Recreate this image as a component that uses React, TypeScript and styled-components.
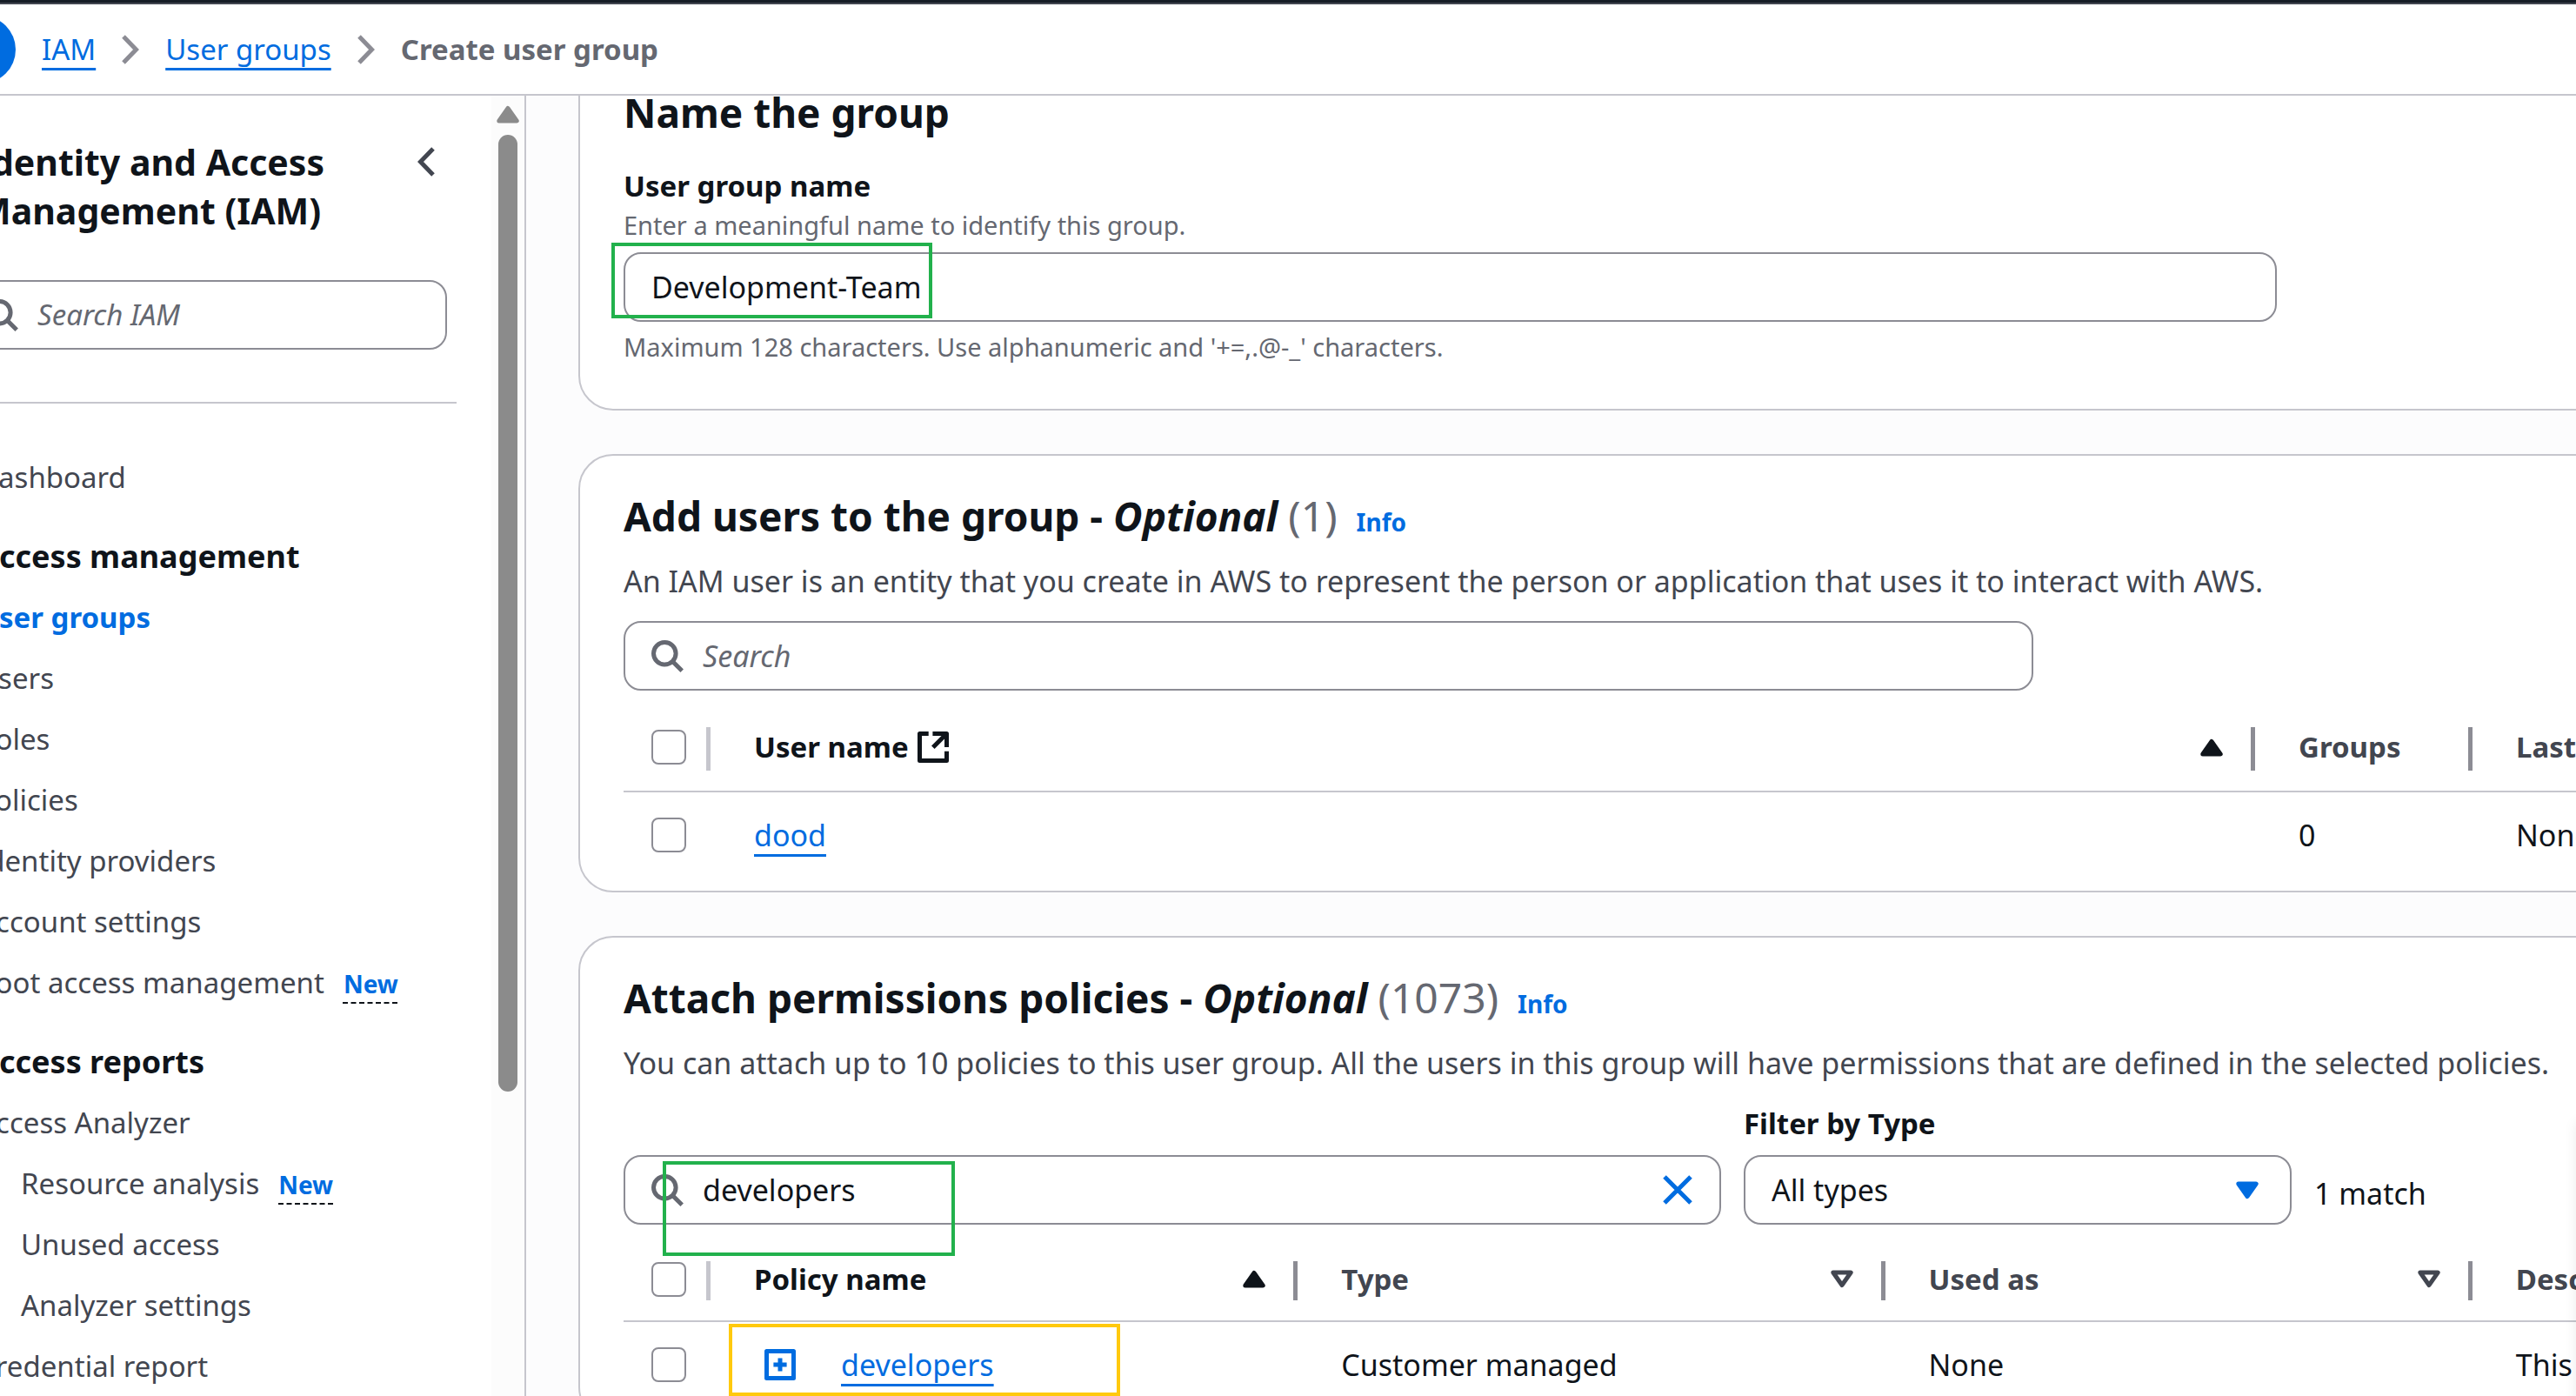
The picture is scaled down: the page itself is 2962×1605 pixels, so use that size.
import React from 'react';
import styled, { createGlobalStyle, css } from 'styled-components';

const color = {
  ink: '#0f141a',
  body: '#424650',
  muted: '#656871',
  control: '#8c8c94',
  line: '#c6c6cd',
  link: '#006ce0',
  green: '#22b14c',
  yellow: '#ffc90e',
};

const GlobalStyle = createGlobalStyle`
  *, *::before, *::after { box-sizing: border-box; }
  body {
    margin: 0;
    overflow: hidden;
    background: #fff;
    color: ${color.ink};
    font-family: "Noto Sans", "Open Sans", sans-serif;
    font-size: 34px;
    line-height: 50px;
  }
  h1, h2, h3, p, ul { margin: 0; padding: 0; }
  input, select, button { font: inherit; color: inherit; margin: 0; }
  button { border: 0; padding: 0; background: none; display: flex; align-items: center; cursor: pointer; }
  svg { display: block; flex: none; }
`;

/* ---------- icons ---------- */

const SearchIcon = () => (
  <svg width="37" height="37" viewBox="0 0 37 37" fill="none" stroke={color.muted} strokeWidth="5">
    <circle cx="15.3" cy="15.3" r="12.8" />
    <path d="M24.4 24.4 35.2 35.2" />
  </svg>
);

const ChevronRight = () => (
  <svg width="20" height="34" viewBox="0 0 20 34" fill="none" stroke={color.control} strokeWidth="5">
    <path d="M2 2 16.5 17 2 32" />
  </svg>
);

const ChevronLeft = () => (
  <svg width="20" height="34" viewBox="0 0 20 34" fill="none" stroke={color.body} strokeWidth="5">
    <path d="M18 2 3.5 17 18 32" />
  </svg>
);

const ExternalIcon = () => (
  <svg width="36" height="36" viewBox="0 0 36 36" fill="none" stroke={color.ink} strokeWidth="5" strokeLinejoin="round">
    <path d="M12.7 2.5H2.5v31h31V22.8" />
    <path d="M17.4 2.5h16.1v15.6" />
    <path d="M33 3 17.8 18.2" />
  </svg>
);

const CloseIcon = () => (
  <svg width="34" height="34" viewBox="0 0 34 34" fill="none" stroke={color.link} strokeWidth="5">
    <path d="M2 2 32 32M32 2 2 32" />
  </svg>
);

const ExpandIcon = () => (
  <svg width="36" height="36" viewBox="0 0 36 36" fill="none" stroke={color.link} strokeWidth="5" strokeLinejoin="round">
    <path d="M2.5 2.5h31v31h-31z" />
    <path d="M10.4 18h15.2M18 10.4v15.2" />
  </svg>
);

const Caret = ({ tint, up, hollow }: { tint: string; up?: boolean; hollow?: boolean }) => (
  <svg width="26" height="21" viewBox="0 0 26 21" stroke={tint} strokeWidth="5" strokeLinejoin="round" fill={hollow ? 'none' : tint}>
    <path d={up ? 'M13 3.5 23.2 18H2.8z' : 'M13 17.5 23.2 3H2.8z'} />
  </svg>
);

/* ---------- shell ---------- */

const Shell = styled.div`
  display: flex;
  flex-direction: column;
  height: 100vh;
  margin-left: -95px;
  overflow: hidden;
`;

const TopStrip = styled.div`
  flex: none;
  height: 5px;
  background: #161d26;
  border-bottom: 2px solid ${color.body};
`;

const Header = styled.header`
  flex: none;
  display: flex;
  align-items: center;
  gap: 30px;
  height: 105px;
  padding-left: 35px;
  border-bottom: 2px solid ${color.line};
  font-size: 33px;
`;

const MenuButton = styled.button`
  width: 78px;
  height: 78px;
  border-radius: 50%;
  background: ${color.link};
`;

const Crumbs = styled.nav`
  display: flex;
  align-items: center;
  gap: 30px;
`;

const Current = styled.span`
  color: ${color.muted};
  font-weight: 700;
`;

const Link = styled.a`
  color: ${color.link};
  text-decoration: underline 3px;
  text-underline-offset: 9px;
  text-decoration-skip-ink: none;
`;

const Columns = styled.div`
  flex: 1;
  min-height: 0;
  display: grid;
  grid-template-columns: 700px minmax(0, 1fr);
`;

/* ---------- sidebar ---------- */

const Sidebar = styled.aside`
  display: flex;
  min-height: 0;
  overflow: hidden;
  border-right: 2px solid ${color.line};
  font-size: 33px;
`;

const SideBody = styled.div`
  flex: 1;
  min-width: 0;
  display: flex;
  flex-direction: column;
  padding: 48px 40px 0 47px;
`;

const SideHead = styled.div`
  display: flex;
  justify-content: space-between;
  align-items: flex-start;
  padding: 0 25px 0 22px;
`;

const SideTitle = styled.h2`
  flex: 1;
  font-size: 41px;
  line-height: 56px;
`;

const CollapseButton = styled.button`
  height: 56px;
`;

const SideSearch = styled.div`
  padding: 52px 11px 60px 0;
`;

const SideRule = styled.hr`
  width: 100%;
  margin: 0 0 50px;
  border: 0;
  border-top: 2px solid ${color.line};
`;

const NavList = styled.ul`
  list-style: none;
  padding-left: 22px;
`;

const NavItem = styled.li<{ $level?: number }>`
  display: flex;
  align-items: baseline;
  gap: 22px;
  padding-left: ${(p) => (p.$level ? 50 : 0)}px;
  line-height: 70px;
  white-space: nowrap;
`;

const NavHeading = styled.li`
  margin-top: 21px;
  font-size: 36px;
  font-weight: 700;
  line-height: 70px;
`;

const NavLink = styled.a<{ $active?: boolean }>`
  color: ${(p) => (p.$active ? color.link : color.body)};
  font-weight: ${(p) => (p.$active ? 700 : 400)};
  text-decoration: none;
`;

const NewTag = styled.span`
  color: ${color.link};
  font-size: 28px;
  font-weight: 700;
  line-height: 30px;
  text-decoration: underline dashed ${color.ink} 2px;
  text-underline-offset: 10px;
`;

const ScrollTrack = styled.div`
  flex: none;
  width: 38px;
  display: flex;
  flex-direction: column;
  align-items: center;
  padding-top: 11px;
  background: #fcfcfc;
`;

const ScrollThumb = styled.div`
  flex: 22;
  width: 22px;
  margin-top: 13px;
  border-radius: 11px;
  background: #8b8b8b;
`;

const ScrollRest = styled.div`
  flex: 7;
`;

/* ---------- main ---------- */

const Main = styled.main`
  min-height: 0;
  overflow: hidden;
  background: #fcfcfd;
`;

const Stack = styled.div`
  display: flex;
  flex-direction: column;
  gap: 50px;
  margin: -52px -608px 0 60px;
`;

const Card = styled.section<{ $bottom: number }>`
  padding: 41px 50px ${(p) => p.$bottom}px;
  border: 2px solid ${color.line};
  border-radius: 40px;
  background: #fff;
`;

const CardHead = styled.div`
  display: flex;
  align-items: baseline;
  gap: 22px;
`;

const CardTitle = styled.h2`
  font-size: 46px;
  line-height: 56px;
  white-space: nowrap;
`;

const Count = styled.span`
  color: ${color.muted};
  font-size: 48px;
  font-weight: 400;
  line-height: 50px;
`;

const InfoLink = styled.a`
  color: ${color.link};
  font-size: 28px;
  font-weight: 700;
  line-height: 30px;
  text-decoration: none;
`;

const Description = styled.p`
  margin: 22px 0 21px;
  color: ${color.body};
  white-space: nowrap;
`;

const FieldLabel = styled.label`
  display: block;
  font-size: 33px;
  font-weight: 700;
  line-height: 48px;
`;

const Field = styled.div`
  padding-top: 33px;
`;

const Hint = styled.p`
  color: ${color.muted};
  font-size: 29px;
  line-height: 42px;
`;

const controlBox = css`
  height: 80px;
  border: 2px solid ${color.control};
  border-radius: 20px;
  background: #fff;
`;

const InputWrap = styled.div`
  position: relative;
  max-width: 1901px;
  margin: 10px 0 8px;
`;

const TextInput = styled.input`
  ${controlBox}
  display: block;
  width: 100%;
  padding: 0 30px;
`;

const SearchBox = styled.div<{ $width?: number }>`
  ${controlBox}
  position: relative;
  display: flex;
  align-items: center;
  gap: 22px;
  padding: 0 31px 0 30px;
  ${(p) => p.$width && css`flex: 0 1 ${p.$width}px; max-width: ${p.$width}px;`}
`;

const SearchInput = styled.input`
  flex: 1;
  min-width: 0;
  padding: 0;
  border: 0;
  outline: 0;
  background: none;
  &::placeholder { color: ${color.muted}; font-style: italic; opacity: 1; }
`;

const FilterBar = styled.div`
  display: flex;
  align-items: flex-end;
  gap: 26px;
`;

const FilterField = styled.div`
  flex: 0 1 630px;
`;

const SelectWrap = styled.div`
  position: relative;
  margin-top: 12px;
`;

const Select = styled.select`
  ${controlBox}
  appearance: none;
  display: block;
  width: 100%;
  padding: 0 80px 0 30px;
`;

const SelectCaret = styled.span`
  position: absolute;
  top: 30px;
  right: 38px;
  pointer-events: none;
`;

const MatchCount = styled.span`
  margin-bottom: 11px;
`;

/* Outline laid over a value to draw attention to it. */
const Marker = styled.span<{ $tint: string; $x: number; $y: number; $w: number; $h: number }>`
  position: absolute;
  left: ${(p) => p.$x}px;
  top: ${(p) => p.$y}px;
  width: ${(p) => p.$w}px;
  height: ${(p) => p.$h}px;
  border: 4px solid ${(p) => p.$tint};
  pointer-events: none;
`;

/* ---------- table ---------- */

const Table = styled.table`
  width: 100%;
  margin-top: 15px;
  table-layout: fixed;
  border-collapse: separate;
  border-spacing: 0;
`;

const Col = styled.col<{ $width?: number }>`
  width: ${(p) => (p.$width ? `${p.$width}px` : 'auto')};
`;

const Th = styled.th<{ $height: number }>`
  height: ${(p) => p.$height + 2}px;
  padding: 0;
  border-bottom: 2px solid ${color.line};
  font-size: 33px;
  text-align: left;
  white-space: nowrap;
`;

const ThInner = styled.div<{ $sorted?: boolean; $pick?: boolean }>`
  display: flex;
  align-items: center;
  justify-content: space-between;
  padding-left: ${(p) => (p.$pick ? 32 : 50)}px;
  color: ${(p) => (p.$sorted ? color.ink : color.body)};
`;

const SortButton = styled.button`
  flex: 1;
  justify-content: space-between;
  margin-right: 32px;
  font-weight: 700;
`;

const HeadLabel = styled.span`
  display: flex;
  align-items: center;
  gap: 10px;
`;

const Divider = styled.span<{ $tint: string; $height: number }>`
  width: 5px;
  height: ${(p) => p.$height}px;
  margin-top: 4px;
  background: ${(p) => p.$tint};
`;

const Td = styled.td<{ $pad?: number }>`
  position: relative;
  height: 98px;
  padding: 0 0 0 ${(p) => p.$pad ?? 50}px;
  white-space: nowrap;
`;

const NameWithToggle = styled.div`
  display: flex;
  align-items: center;
  gap: 52px;
`;

const Checkbox = styled.input.attrs({ type: 'checkbox' })`
  appearance: none;
  display: block;
  width: 40px;
  height: 40px;
  border: 2px solid ${color.control};
  border-radius: 8px;
  background: #fff;
`;

/* Drawer parked past the window's right edge; only its shadow falls inside. */
const ParkedDrawer = styled.div`
  position: fixed;
  top: 1290px;
  bottom: -40px;
  right: -60px;
  width: 60px;
  box-shadow: 0 0 14px rgba(0, 7, 22, 0.08);
`;

type HeadProps = { label: string; height: number; bar: number; sort?: 'asc' | 'none'; external?: boolean };

const HeadCell = ({ label, height, bar, sort, external }: HeadProps) => {
  const text = (
    <HeadLabel>
      {label}
      {external && <ExternalIcon />}
    </HeadLabel>
  );
  return (
    <Th $height={height} scope="col">
      <ThInner $sorted={sort === 'asc'}>
        {sort ? (
          <SortButton type="button">
            {text}
            <Caret tint={sort === 'asc' ? color.ink : color.body} up={sort === 'asc'} hollow={sort === 'none'} />
          </SortButton>
        ) : (
          text
        )}
        <Divider $tint={color.control} $height={bar} />
      </ThInner>
    </Th>
  );
};

const PickAll = ({ height, bar, label }: { height: number; bar: number; label: string }) => (
  <Th $height={height} scope="col">
    <ThInner $pick>
      <Checkbox aria-label={label} />
      <Divider $tint={color.line} $height={bar} />
    </ThInner>
  </Th>
);

type Entry = { label: string; heading?: boolean; active?: boolean; level?: number; isNew?: boolean };

const entries: Entry[] = [
  { label: 'Dashboard' },
  { label: 'Access management', heading: true },
  { label: 'User groups', active: true },
  { label: 'Users' },
  { label: 'Roles' },
  { label: 'Policies' },
  { label: 'Identity providers' },
  { label: 'Account settings' },
  { label: 'Root access management', isNew: true },
  { label: 'Access reports', heading: true },
  { label: 'Access Analyzer' },
  { label: 'Resource analysis', level: 1, isNew: true },
  { label: 'Unused access', level: 1 },
  { label: 'Analyzer settings', level: 1 },
  { label: 'Credential report' },
];

export default function App() {
  return (
    <>
      <GlobalStyle />
      <Shell>
        <TopStrip />
        <Header>
          <MenuButton type="button" aria-label="Open navigation" />
          <Crumbs aria-label="Breadcrumbs">
            <Link href="#iam">IAM</Link>
            <ChevronRight />
            <Link href="#groups">User groups</Link>
            <ChevronRight />
            <Current>Create user group</Current>
          </Crumbs>
        </Header>

        <Columns>
          <Sidebar>
            <SideBody>
              <SideHead>
                <SideTitle>Identity and Access Management (IAM)</SideTitle>
                <CollapseButton type="button" aria-label="Close navigation">
                  <ChevronLeft />
                </CollapseButton>
              </SideHead>
              <SideSearch>
                <SearchBox>
                  <SearchIcon />
                  <SearchInput aria-label="Search IAM" placeholder="Search IAM" />
                </SearchBox>
              </SideSearch>
              <SideRule />
              <NavList>
                {entries.map((e) =>
                  e.heading ? (
                    <NavHeading key={e.label}>{e.label}</NavHeading>
                  ) : (
                    <NavItem key={e.label} $level={e.level}>
                      <NavLink href="#nav" $active={e.active}>
                        {e.label}
                      </NavLink>
                      {e.isNew && <NewTag>New</NewTag>}
                    </NavItem>
                  ),
                )}
              </NavList>
            </SideBody>
            <ScrollTrack aria-hidden="true">
              <Caret tint="#8b8b8b" up />
              <ScrollThumb />
              <ScrollRest />
            </ScrollTrack>
          </Sidebar>

          <Main>
            <Stack>
              <Card $bottom={50}>
                <CardTitle>Name the group</CardTitle>
                <Field>
                  <FieldLabel htmlFor="group-name">User group name</FieldLabel>
                  <Hint>Enter a meaningful name to identify this group.</Hint>
                  <InputWrap>
                    <TextInput id="group-name" defaultValue="Development-Team" />
                    <Marker $tint={color.green} $x={-14} $y={-11} $w={369} $h={87} />
                  </InputWrap>
                  <Hint>Maximum 128 characters. Use alphanumeric and '+=,.@-_' characters.</Hint>
                </Field>
              </Card>

              <Card $bottom={15}>
                <CardHead>
                  <CardTitle>
                    Add users to the group - <em>Optional</em> <Count>(1)</Count>
                  </CardTitle>
                  <InfoLink href="#info-users">Info</InfoLink>
                </CardHead>
                <Description>
                  An IAM user is an entity that you create in AWS to represent the person or application that uses it to
                  interact with AWS.
                </Description>
                <SearchBox $width={1621}>
                  <SearchIcon />
                  <SearchInput aria-label="Search users" placeholder="Search" />
                </SearchBox>
                <Table>
                  <colgroup>
                    <Col $width={100} />
                    <Col />
                    <Col $width={250} />
                    <Col $width={675} />
                  </colgroup>
                  <thead>
                    <tr>
                      <PickAll height={100} bar={50} label="Select all users" />
                      <HeadCell label="User name" height={100} bar={50} sort="asc" external />
                      <HeadCell label="Groups" height={100} bar={50} />
                      <HeadCell label="Last activity" height={100} bar={50} />
                    </tr>
                  </thead>
                  <tbody>
                    <tr>
                      <Td $pad={32}>
                        <Checkbox aria-label="Select dood" />
                      </Td>
                      <Td>
                        <Link href="#dood">dood</Link>
                      </Td>
                      <Td>0</Td>
                      <Td>None</Td>
                    </tr>
                  </tbody>
                </Table>
              </Card>

              <Card $bottom={15}>
                <CardHead>
                  <CardTitle>
                    Attach permissions policies - <em>Optional</em> <Count>(1073)</Count>
                  </CardTitle>
                  <InfoLink href="#info-policies">Info</InfoLink>
                </CardHead>
                <Description>
                  You can attach up to 10 policies to this user group. All the users in this group will have permissions
                  that are defined in the selected policies.
                </Description>
                <FilterBar>
                  <SearchBox $width={1262}>
                    <SearchIcon />
                    <SearchInput aria-label="Search policies" defaultValue="developers" />
                    <button type="button" aria-label="Clear search">
                      <CloseIcon />
                    </button>
                    <Marker $tint={color.green} $x={43} $y={5} $w={336} $h={109} />
                  </SearchBox>
                  <FilterField>
                    <FieldLabel htmlFor="type-filter">Filter by Type</FieldLabel>
                    <SelectWrap>
                      <Select id="type-filter" defaultValue="all">
                        <option value="all">All types</option>
                      </Select>
                      <SelectCaret>
                        <Caret tint={color.link} />
                      </SelectCaret>
                    </SelectWrap>
                  </FilterField>
                  <MatchCount>1 match</MatchCount>
                </FilterBar>
                <Table>
                  <colgroup>
                    <Col $width={100} />
                    <Col />
                    <Col />
                    <Col />
                    <Col />
                  </colgroup>
                  <thead>
                    <tr>
                      <PickAll height={95} bar={45} label="Select all policies" />
                      <HeadCell label="Policy name" height={95} bar={45} sort="asc" />
                      <HeadCell label="Type" height={95} bar={45} sort="none" />
                      <HeadCell label="Used as" height={95} bar={45} sort="none" />
                      <HeadCell label="Description" height={95} bar={45} />
                    </tr>
                  </thead>
                  <tbody>
                    <tr>
                      <Td $pad={32}>
                        <Checkbox aria-label="Select developers" />
                      </Td>
                      <Td $pad={62}>
                        <NameWithToggle>
                          <button type="button" aria-label="Expand developers">
                            <ExpandIcon />
                          </button>
                          <Link href="#developers">developers</Link>
                        </NameWithToggle>
                        <Marker $tint={color.yellow} $x={21} $y={2} $w={450} $h={83} />
                      </Td>
                      <Td>Customer managed</Td>
                      <Td>None</Td>
                      <Td>This policy</Td>
                    </tr>
                  </tbody>
                </Table>
              </Card>
            </Stack>
          </Main>
        </Columns>
      </Shell>
      <ParkedDrawer />
    </>
  );
}
